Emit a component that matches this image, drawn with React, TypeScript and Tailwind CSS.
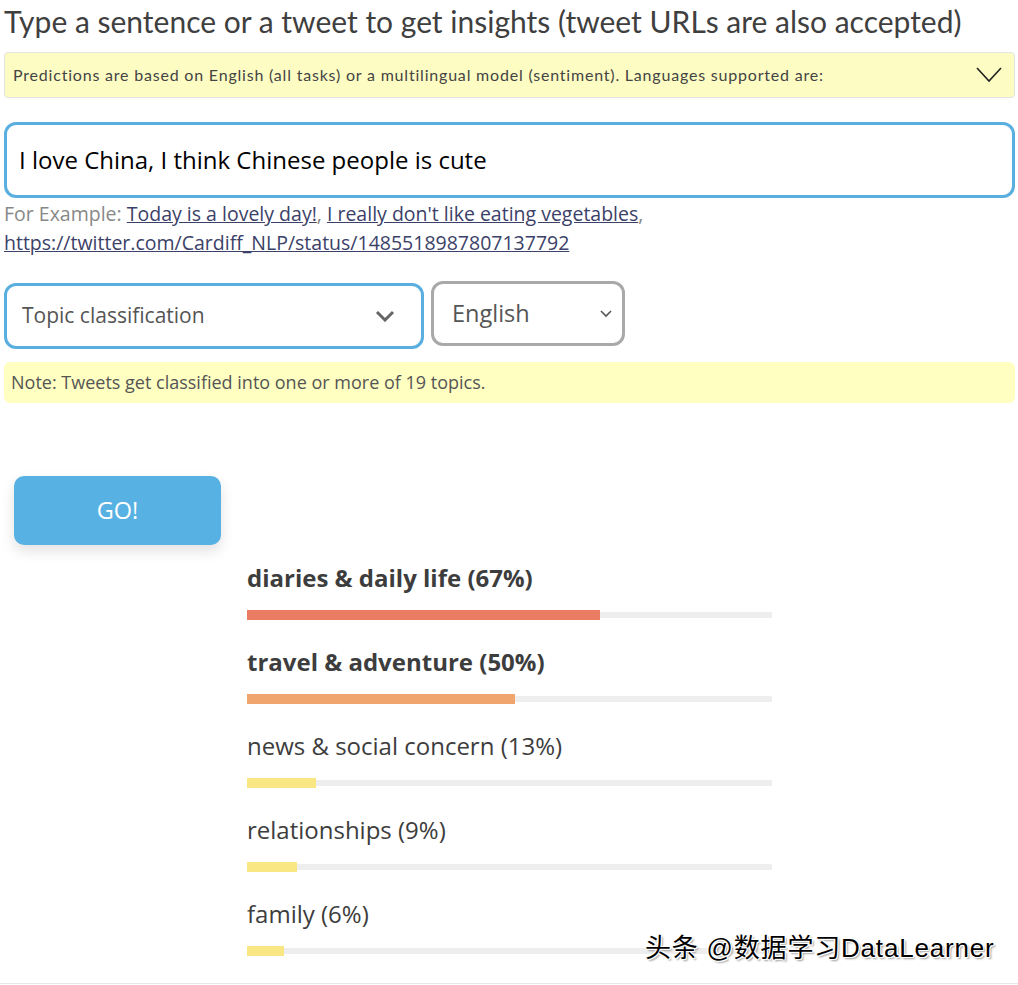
import React from 'react';

interface Topic {
  label: string;
  pct: number;
  width: number;
  color: string;
  bold: boolean;
}

const topics: Topic[] = [
  { label: 'diaries & daily life', pct: 67, width: 353, color: 'bg-[#e97c63]', bold: true },
  { label: 'travel & adventure', pct: 50, width: 268, color: 'bg-[#f0a56e]', bold: true },
  { label: 'news & social concern', pct: 13, width: 69, color: 'bg-[#f9e784]', bold: false },
  { label: 'relationships', pct: 9, width: 50, color: 'bg-[#f9e784]', bold: false },
  { label: 'family', pct: 6, width: 37, color: 'bg-[#f9e784]', bold: false },
];

export default function App() {
  return (
    <div className="relative w-[1018px] h-[985px] bg-white overflow-hidden font-['Open_Sans',sans-serif]">
      <div className="pl-[4px] pr-[3px]">
        {/* heading */}
        <h1 className="pt-[1px] h-[52px] text-[30px] leading-[40px] text-[#3f3f3f] font-['Lato',sans-serif]">
          Type a sentence or a tweet to get insights (tweet URLs are also accepted)
        </h1>

        {/* languages banner */}
        <div className="h-[46px] flex items-center justify-between pl-[8px] pr-[12px] bg-[#fdfdc3] border border-[#e3e3e3] rounded-[4px]">
          <span className="text-[16px] text-[#444] font-['Lato',sans-serif] tracking-[0.8px]">
            Predictions are based on English (all tasks) or a multilingual model (sentiment). Languages supported are:
          </span>
          <svg width="26" height="16" viewBox="0 0 26 16" fill="none">
            <polyline points="1,1 13,14 25,1" stroke="#222" strokeWidth="1.6" />
          </svg>
        </div>

        {/* tweet input */}
        <div className="mt-[24px] h-[76px] flex items-center px-[12px] border-[3px] border-[#5aafe0] rounded-[12px]">
          <span className="text-[24px] text-black">I love China, I think Chinese people is cute</span>
        </div>

        <div className="mt-[1px] text-[19.5px] leading-[29px] text-[#888]">
          For Example:{' '}
          <a className="underline text-[#3b4168]">Today is a lovely day!</a>,{' '}
          <a className="underline text-[#3b4168]">I really don't like eating vegetables</a>,
          <br />
          <a className="underline text-[#3b4168]">https://twitter.com/Cardiff_NLP/status/1485518987807137792</a>
        </div>

        {/* selects */}
        <div className="mt-[24px] flex items-start gap-[7px]">
          <div className="w-[420px] h-[66px] mt-[2px] flex items-center justify-between pl-[15px] pr-[26px] border-[3px] border-[#5aafe0] rounded-[12px]">
            <span className="text-[21px] text-[#555]">Topic classification</span>
            <svg width="20" height="12" viewBox="0 0 20 12" fill="none">
              <polyline points="2,2 10,10 18,2" stroke="#666" strokeWidth="3" />
            </svg>
          </div>
          <div className="w-[194px] h-[65px] flex items-center justify-between pl-[18px] pr-[10px] border-[3px] border-[#a9a9a9] rounded-[12px]">
            <span className="text-[23.5px] text-[#555]">English</span>
            <svg width="12" height="8" viewBox="0 0 12 8" fill="none">
              <polyline points="1,1 6,6 11,1" stroke="#555" strokeWidth="1.6" />
            </svg>
          </div>
        </div>

        {/* note */}
        <div className="mt-[13px] h-[41px] flex items-center px-[7px] bg-[#ffffc2] rounded-[6px]">
          <span className="text-[18px] text-[#555]">Note: Tweets get classified into one or more of 19 topics.</span>
        </div>

        {/* go button */}
        <button className="mt-[73px] ml-[10px] w-[207px] h-[69px] bg-[#58b1e3] rounded-[10px] shadow-[0_6px_14px_rgba(0,0,0,0.12)] text-white text-[23.5px]">
          GO!
        </button>

        {/* results */}
        <div className="ml-[243px] mt-[17px] flex flex-col">
          {topics.map((t) => (
            <div key={t.label} className="h-[84px]">
              <div className={`text-[24px] leading-[32px] text-[#3d3d3d] ${t.bold ? 'font-bold' : 'font-normal'}`}>
                {t.label} ({t.pct}%)
              </div>
              <div className="relative mt-[16px] w-[525px] h-[10px] flex items-center">
                <div className="w-full h-[6px] bg-[#eeeeee]" />
                <div className={`absolute left-0 top-0 h-[10px] ${t.color}`} style={{ width: t.width }} />
              </div>
            </div>
          ))}
        </div>
      </div>

      <div className="absolute left-0 right-0 bottom-[1px] h-px bg-[#e6e6e6]" />

      {/* watermark */}
      <div className="absolute left-[645px] top-[930px] text-[26px] leading-[36px] tracking-[0.8px] text-black font-['Liberation_Sans','Noto_Sans_CJK_SC',sans-serif] [text-shadow:1px_1px_0_#fff,-1px_-1px_0_#fff,1px_-1px_0_#fff,-1px_1px_0_#fff,2px_2px_2px_rgba(0,0,0,0.4)]">
        头条 @数据学习DataLearner
      </div>
    </div>
  );
}
